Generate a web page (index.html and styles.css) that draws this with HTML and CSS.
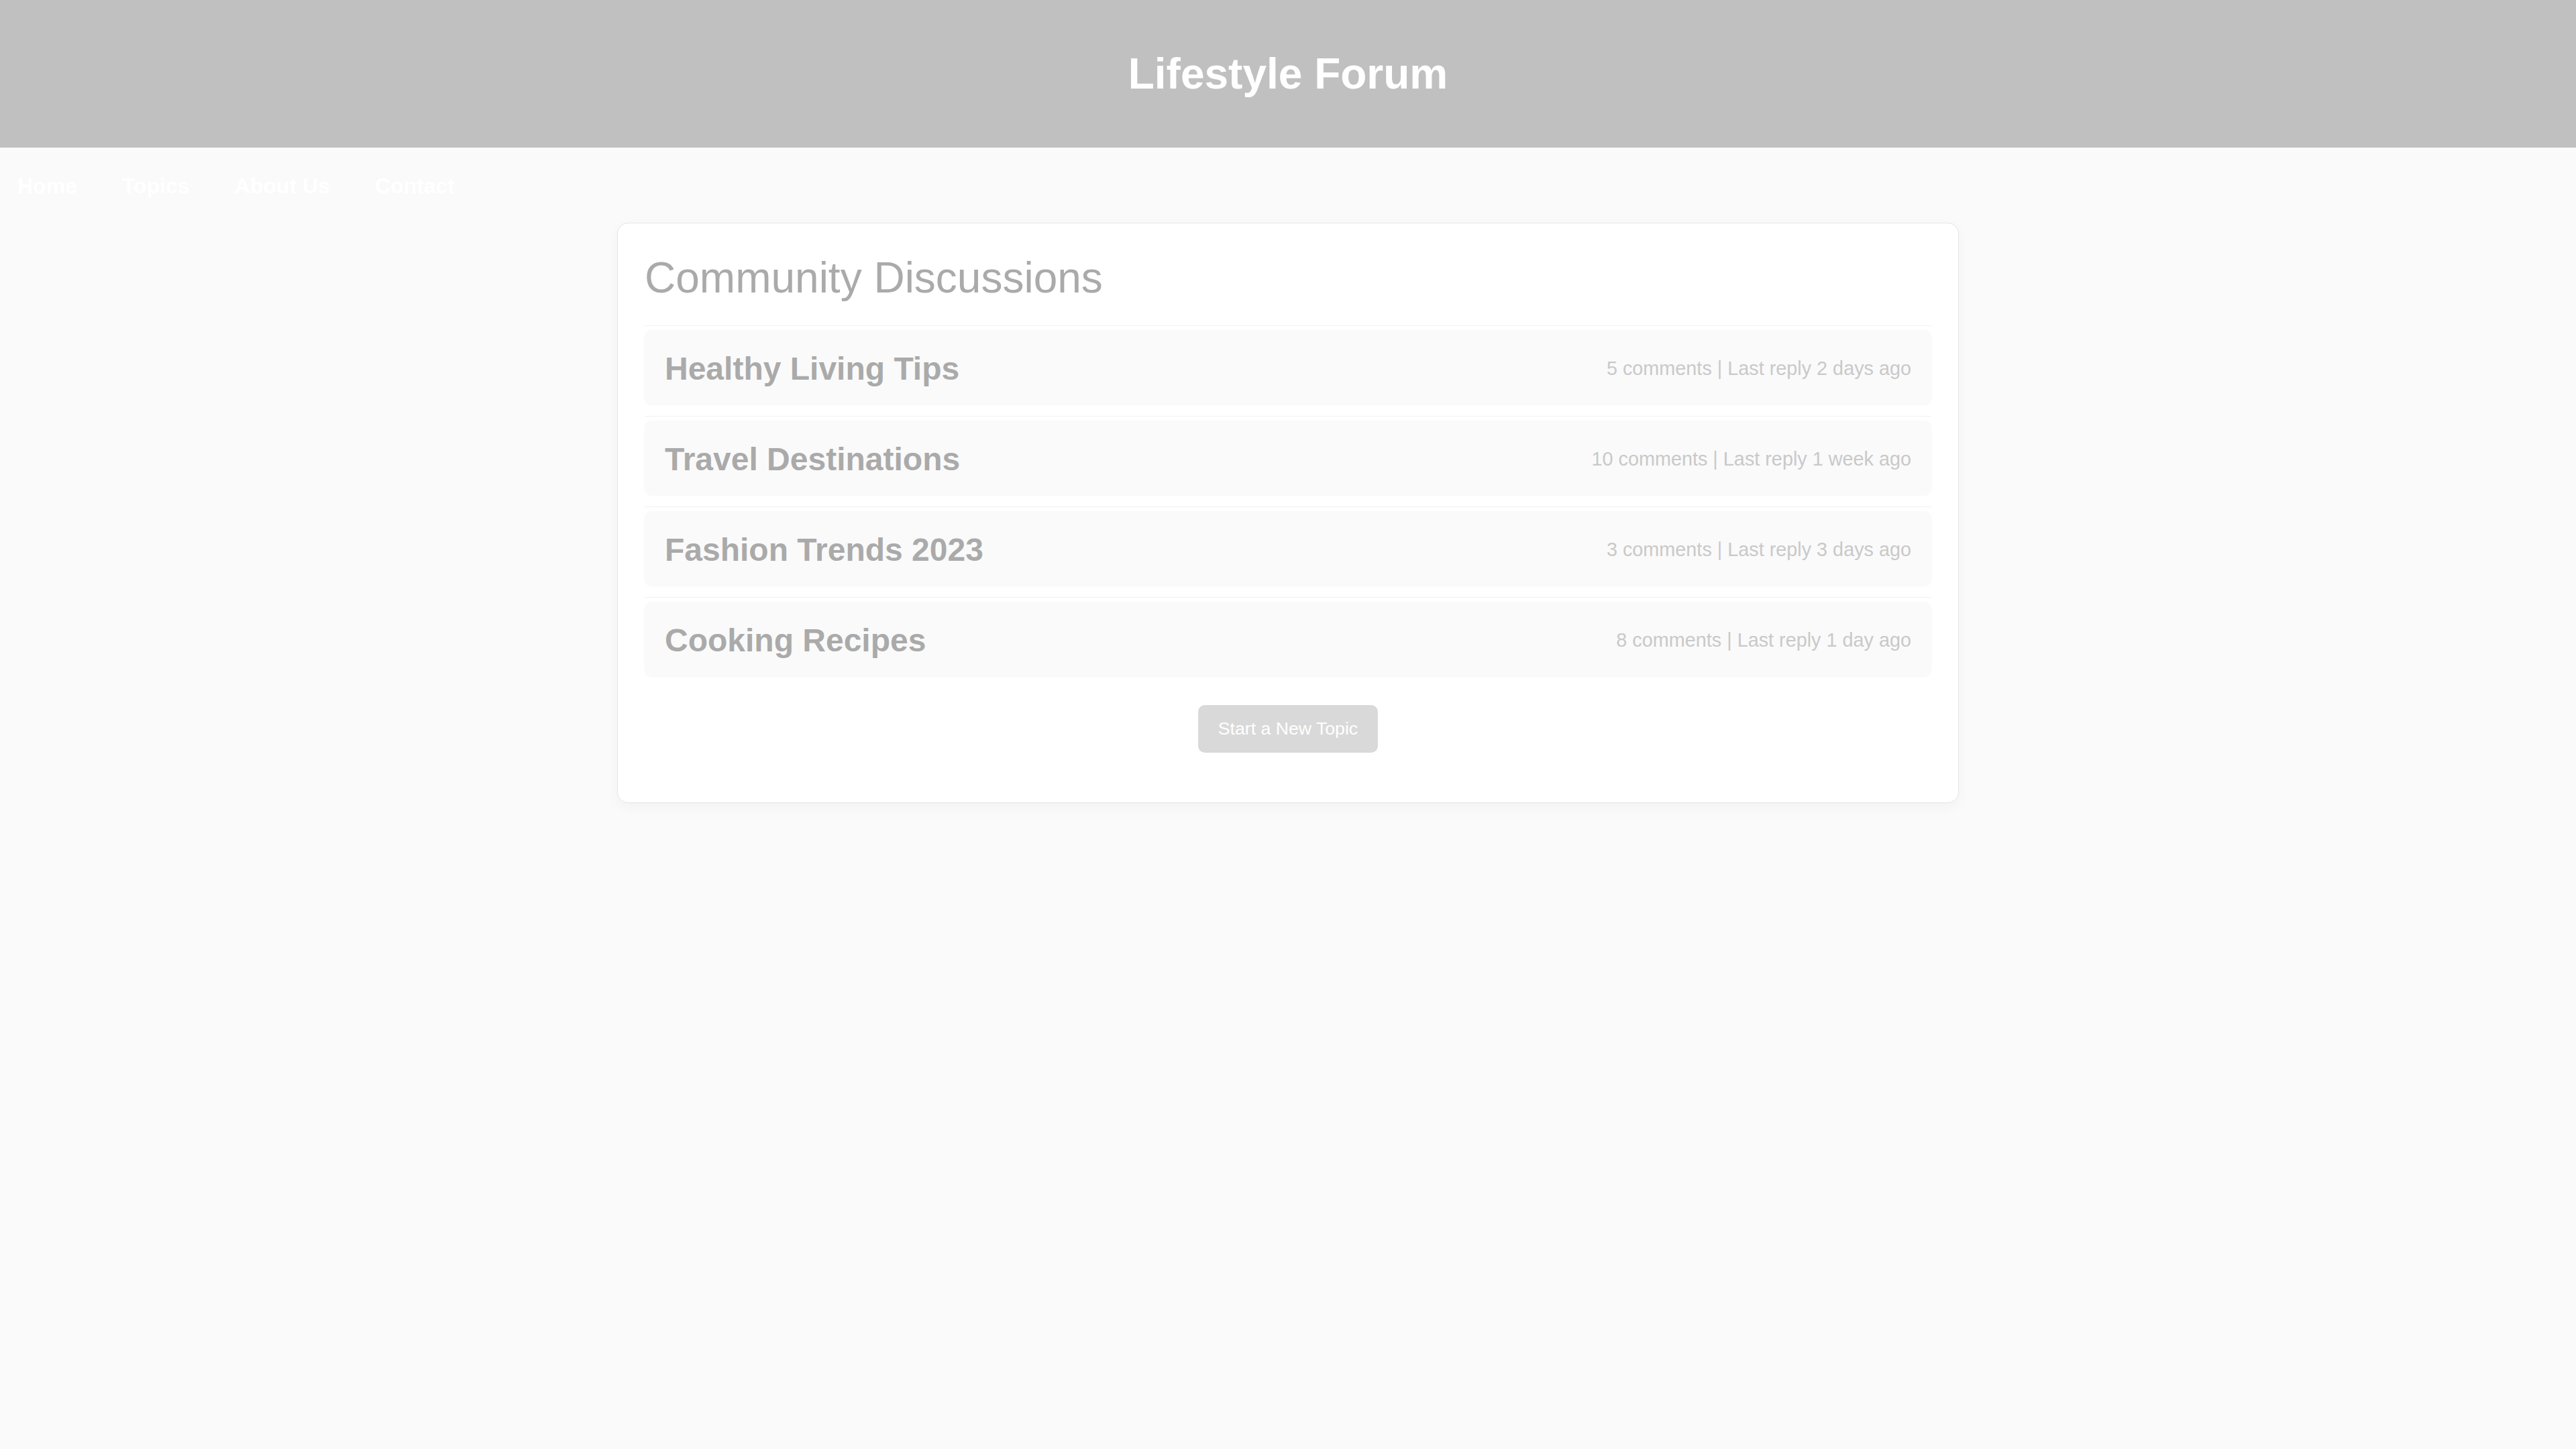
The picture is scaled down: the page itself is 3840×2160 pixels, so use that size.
FILE: index.html
```
<!DOCTYPE html>
<html lang="en">
<head>
<meta charset="utf-8">
<title>Lifestyle Forum</title>
<link rel="stylesheet" href="styles.css">
</head>
<body>
<header class="site-header">
  <h1 class="site-title">Lifestyle Forum</h1>
</header>
<nav class="site-nav">
  <a class="nav-link" href="#">Home</a>
  <a class="nav-link" href="#">Topics</a>
  <a class="nav-link" href="#">About Us</a>
  <a class="nav-link" href="#">Contact</a>
</nav>
<main class="card">
  <h2 class="card-title">Community Discussions</h2>
  <ul class="topic-list">
    <li class="topic-row">
      <div class="topic">
        <h3 class="topic-title">Healthy Living Tips</h3>
        <span class="topic-meta">5 comments | Last reply 2 days ago</span>
      </div>
    </li>
    <li class="topic-row">
      <div class="topic">
        <h3 class="topic-title">Travel Destinations</h3>
        <span class="topic-meta">10 comments | Last reply 1 week ago</span>
      </div>
    </li>
    <li class="topic-row">
      <div class="topic">
        <h3 class="topic-title">Fashion Trends 2023</h3>
        <span class="topic-meta">3 comments | Last reply 3 days ago</span>
      </div>
    </li>
    <li class="topic-row">
      <div class="topic">
        <h3 class="topic-title">Cooking Recipes</h3>
        <span class="topic-meta">8 comments | Last reply 1 day ago</span>
      </div>
    </li>
  </ul>
  <div class="actions">
    <button class="new-topic" type="button">Start a New Topic</button>
  </div>
</main>
</body>
</html>
```

FILE: styles.css
```
* {
  box-sizing: border-box;
}

html, body {
  margin: 0;
  padding: 0;
}

body {
  background: #fafafa;
  font-family: "Liberation Sans", Arial, sans-serif;
  min-height: 2160px;
}

.site-header {
  height: 220px;
  background: #c0c0c0;
  display: flex;
  align-items: center;
  justify-content: center;
}

.site-title {
  margin: 0;
  font-size: 64px;
  font-weight: bold;
  color: #ffffff;
}

.site-nav {
  display: flex;
  gap: 67px;
  padding: 39px 26px 0;
}

.nav-link {
  color: #ffffff;
  font-size: 32px;
  font-weight: bold;
  text-decoration: none;
}

.card {
  display: block;
  width: 2000px;
  margin: 36px auto 0;
  background: #ffffff;
  border: 1px solid #e6e6e6;
  border-radius: 16px;
  box-shadow: 0 6px 18px rgba(0, 0, 0, 0.035);
  padding: 44px 40px 40px;
}

.card-title {
  margin: 0 0 34px;
  font-size: 64px;
  font-weight: normal;
  color: #aaaaaa;
}

.topic-list {
  list-style: none;
  margin: 0;
  padding: 0;
}

.topic-row {
  border-top: 1px solid #f1f1f1;
  padding-top: 6px;
  margin-bottom: 17px;
}

.topic {
  display: flex;
  align-items: center;
  justify-content: space-between;
  background: #fafafa;
  border-radius: 10px;
  box-shadow: 0 1px 3px rgba(0, 0, 0, 0.03);
  padding: 30px 30px 26px;
}

.topic-title {
  margin: 0;
  font-size: 48px;
  font-weight: bold;
  color: #aaaaaa;
}

.topic-meta {
  font-size: 28.8px;
  color: #c9c9c9;
}

.actions {
  text-align: center;
  margin: 43px 0 34px;
}

.new-topic {
  background: #d9d9d9;
  color: #ffffff;
  border: none;
  border-radius: 10px;
  padding: 20px 30px;
  font-family: "Liberation Sans", Arial, sans-serif;
  font-size: 26.67px;
}
```
